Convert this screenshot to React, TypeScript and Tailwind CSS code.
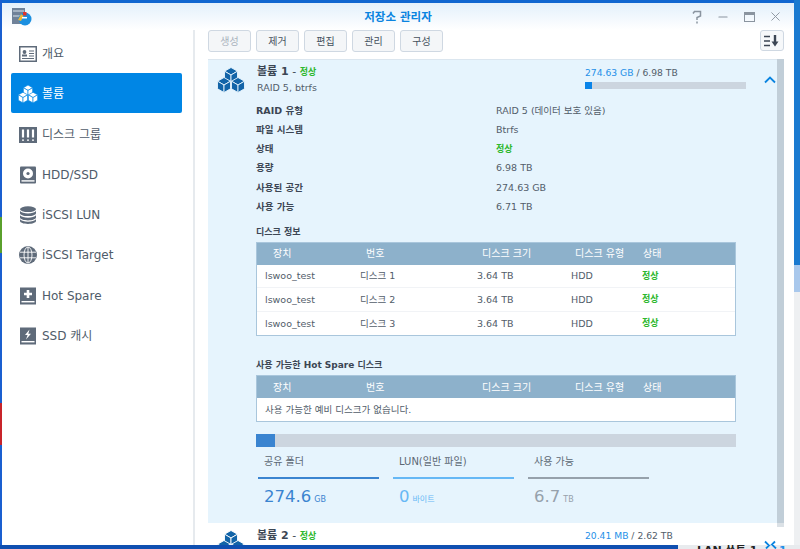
import { Minus, X } from "lucide-react";
import type { ReactNode } from "react";

const font = { fontFamily: '"DejaVu Sans", "Noto Sans CJK KR", sans-serif' };

function Cubes({ className, fill, line }: { className?: string; fill: string; line: string }) {
  const cube = (x: number, y: number) => (
    <g key={`${x}-${y}`} transform={`translate(${x} ${y})`} stroke={line} strokeWidth="0.9" strokeLinejoin="round" fill={fill}>
      <path d="M0 -7.5 L6.5 -3.8 L0 0 L-6.5 -3.8 Z" />
      <path d="M-6.5 -3.8 L0 0 L0 7.5 L-6.5 3.8 Z" />
      <path d="M6.5 -3.8 L0 0 L0 7.5 L6.5 3.8 Z" />
    </g>
  );
  return (
    <svg viewBox="0 0 28 26" className={className}>
      {cube(14, 8)}
      {cube(7, 18)}
      {cube(21, 18)}
    </svg>
  );
}

function OverviewIcon() {
  return (
    <svg viewBox="0 0 18 18" className="h-[18px] w-[18px]">
      <rect x="0.75" y="1.75" width="16.5" height="14.5" fill="#fff" stroke="#5f6b7a" strokeWidth="1.5" />
      <circle cx="5.5" cy="7" r="1.9" fill="#5f6b7a" />
      <rect x="3" y="9.5" width="5" height="2" fill="#5f6b7a" />
      <path d="M10 6h5M10 8.5h5M10 11h5M3 13.5h12" stroke="#5f6b7a" strokeWidth="1.1" />
    </svg>
  );
}

function DiskGroupIcon() {
  return (
    <svg viewBox="0 0 18 18" className="h-[18px] w-[18px]">
      <rect x="0" y="1" width="18" height="16" fill="#5f6b7a" />
      <path d="M4 3.5v8M9 3.5v8M14 3.5v8" stroke="#fff" strokeWidth="2.2" />
      <path d="M4 13.500v1.200M9 13.500v1.200M14 13.500v1.200" stroke="#fff" strokeWidth="2" />
    </svg>
  );
}

function HddIcon() {
  return (
    <svg viewBox="0 0 18 18" className="h-[18px] w-[18px]">
      <rect x="1" y="0.5" width="16" height="17" rx="1" fill="#5f6b7a" />
      <circle cx="9" cy="7.5" r="5" fill="#fff" />
      <circle cx="9" cy="7.5" r="1.6" fill="#5f6b7a" />
      <rect x="2.5" y="14.2" width="13" height="1.4" fill="#fff" />
    </svg>
  );
}

function LunIcon() {
  return (
    <svg viewBox="0 0 18 18" className="h-[18px] w-[18px]" fill="#5f6b7a">
      <ellipse cx="9" cy="3.2" rx="8" ry="2.9" />
      <path d="M1 5v2.2c0 1.6 3.6 2.9 8 2.9s8-1.3 8-2.9V5c-1.2 1.6-4.4 2.4-8 2.4S2.2 6.600 1 5Z" />
      <path d="M1 9.300v2.200c0 1.600 3.600 2.900 8 2.900s8-1.300 8-2.900V9.300c-1.200 1.600-4.400 2.400-8 2.400s-6.800-.8-8-2.400Z" />
      <path d="M1 13.300v1.700c0 1.600 3.600 2.900 8 2.900s8-1.300 8-2.900v-1.700c-1.200 1.600-4.400 2.400-8 2.400s-6.800-.8-8-2.400Z" />
    </svg>
  );
}

function GlobeIcon() {
  return (
    <svg viewBox="0 0 18 18" className="h-[18px] w-[18px]">
      <circle cx="9" cy="9" r="9" fill="#5f6b7a" />
      <path d="M1 6.200h16M1 11.800h16M9 1v16" stroke="#fff" strokeWidth="0.9" />
      <ellipse cx="9" cy="9" rx="4" ry="8" fill="none" stroke="#fff" strokeWidth="0.9" />
    </svg>
  );
}

function SpareIcon() {
  return (
    <svg viewBox="0 0 18 18" className="h-[18px] w-[18px]">
      <rect x="1" y="0.5" width="16" height="17" fill="#5f6b7a" />
      <path d="M9 3v8M5 7h8" stroke="#fff" strokeWidth="2.6" />
      <rect x="2.500" y="14" width="13" height="1.400" fill="#fff" />
    </svg>
  );
}

function SsdIcon() {
  return (
    <svg viewBox="0 0 18 18" className="h-[18px] w-[18px]">
      <rect x="1" y="0.5" width="16" height="17" fill="#5f6b7a" />
      <path d="M10.500 2.500 6 8h2.600L7 12.500 12 6.800H9.300Z" fill="#fff" />
      <rect x="2.500" y="14" width="13" height="1.400" fill="#fff" />
    </svg>
  );
}

function AppIcon() {
  return (
    <svg viewBox="0 0 20 18" className="h-[18px] w-5">
      <rect x="0" y="0" width="13" height="16" fill="#6f8299" />
      <path d="M1 3h11M1 8h11" stroke="#b6c3d1" strokeWidth="1.500" />
      <circle cx="13" cy="11" r="6.500" fill="#1b8fe0" />
      <path d="M6 12 L9 6 L11.500 8 L9 13 Z" fill="#f2b632" />
      <rect x="11" y="4" width="3.500" height="3.500" fill="#e0342c" />
      <rect x="10" y="9" width="5" height="1.500" fill="#fff" />
    </svg>
  );
}

function SortIcon() {
  return (
    <svg viewBox="0 0 16 12" className="h-3 w-4">
      <path d="M0 1.500h6M0 6h6M0 10.500h6" stroke="#3c4654" strokeWidth="1.500" />
      <path d="M11 0v7" stroke="#3c4654" strokeWidth="2.400" />
      <path d="M7.500 6.500h7L11 11.500Z" fill="#3c4654" />
    </svg>
  );
}

function Chevron({ className, down }: { className?: string; down?: boolean }) {
  return (
    <svg viewBox="0 0 12 8" className={`h-2 w-3 shrink-0 ${className ?? ""}`} fill="none" stroke="#0a84e0" strokeWidth="1.800">
      <path d={down ? "M1 1.500 L6 6.500 L11 1.500" : "M1 6.500 L6 1.500 L11 6.500"} />
    </svg>
  );
}

const navItems: { label: string; icon: ReactNode; active?: boolean }[] = [
  { label: "개요", icon: <OverviewIcon /> },
  { label: "볼륨", icon: <Cubes className="h-[20px] w-[20px] shrink-0" fill="#fff" line="#0086e5" />, active: true },
  { label: "디스크 그룹", icon: <DiskGroupIcon /> },
  { label: "HDD/SSD", icon: <HddIcon /> },
  { label: "iSCSI LUN", icon: <LunIcon /> },
  { label: "iSCSI Target", icon: <GlobeIcon /> },
  { label: "Hot Spare", icon: <SpareIcon /> },
  { label: "SSD 캐시", icon: <SsdIcon /> },
];

const details = [
  ["RAID 유형", "RAID 5 (데이터 보호 있음)"],
  ["파일 시스템", "Btrfs"],
  ["상태", "정상"],
  ["용량", "6.98 TB"],
  ["사용된 공간", "274.63 GB"],
  ["사용 가능", "6.71 TB"],
];

const columns = "grid grid-cols-[103px_117px_94px_71px_1fr]";

function TableHead() {
  return (
    <div className={`${columns} h-[22px] items-center bg-[#8db1cb] text-[10px] text-white`}>
      <span className="pl-[16px]">장치</span>
      <span className="pl-[6px]">번호</span>
      <span className="pl-[5px]">디스크 크기</span>
      <span className="pl-[4px]">디스크 유형</span>
      <span className="pl-[1px]">상태</span>
    </div>
  );
}

function Stat({ title, value, unit, line, color, unitColor }: { title: string; value: string; unit: string; line: string; color: string; unitColor: string }) {
  return (
    <div className="w-[121px]">
      <div className="h-[30px] pl-[6px] pt-[8px] text-[10px] leading-[14px] text-[#5c6773]">{title}</div>
      <div className={`h-[2px] ${line}`} />
      <div className="flex items-baseline gap-[3px] pl-[6px] pt-[6px]">
        <span className={`text-[16.500px] leading-[24px] ${color}`}>{value}</span>
        <span className={`text-[8px] ${unitColor}`}>{unit}</span>
      </div>
    </div>
  );
}

export default function App() {
  return (
    <div className="flex h-[549px] w-[800px] flex-col overflow-hidden bg-[#1066d0]" style={font}>
      <div className="flex h-[545px] shrink-0">
        <div className="flex w-[2px] shrink-0 flex-col bg-[#1a5fd0]">
          <div className="mt-[217px] h-[36px] bg-[#5aa02c]" />
          <div className="mt-[150px] h-[42px] bg-[#c8242a]" />
        </div>
        <div className="mt-[3px] flex h-[542px] w-[792px] shrink-0 flex-col overflow-hidden bg-white">
          <header className="relative flex h-[27px] shrink-0 items-center justify-center bg-gradient-to-b from-[#e3f0fb] to-white pt-[2px]">
            <div className="absolute left-[10px] top-[5px]">
              <AppIcon />
            </div>
            <span className="text-[11.500px] font-bold text-[#0a84e0]">저장소 관리자</span>
            <div className="absolute right-[6px] top-[6px] flex items-center text-[#8a949f]">
              <span className="flex w-[26px] justify-center">
                <svg viewBox="0 0 10 14" className="h-[14px] w-[10px]" fill="none" stroke="#8a949f" strokeWidth="1.500">
                  <path d="M1 3.500 L2.500 1.500 H8.500 V6 L5 7.500 V10" />
                  <path d="M5 11.500 V13.500" />
                </svg>
              </span>
              <span className="flex w-[26px] justify-center">
                <Minus className="h-[14px] w-[14px]" strokeWidth={1.8} />
              </span>
              <span className="flex w-[26px] justify-center">
                <span className="h-[10px] w-[11px] border border-t-[3px] border-[#8a949f]" />
              </span>
              <span className="flex w-[26px] justify-center">
                <X className="h-[15px] w-[15px]" strokeWidth={1.5} />
              </span>
            </div>
          </header>

          <div className="flex min-h-0 flex-1">
            <nav className="w-[193px] shrink-0 border-r-2 border-[#e6eaee] pl-[9px] pr-[11px] pt-[3px]">
              {navItems.map((item) => (
                <div
                  key={item.label}
                  className={`mb-[0.3px] flex h-[40px] items-center gap-[5px] rounded-[2px] pl-[8px] pt-[2px] text-[12px] ${item.active ? "bg-[#0086e5] text-white" : "text-[#4f5b69]"}`}
                >
                  <span className="flex w-[18px] items-center justify-center">{item.icon}</span>
                  <span>{item.label}</span>
                </div>
              ))}
            </nav>

            <main className="flex min-w-0 flex-1 flex-col pl-[13px] pr-[10px]">
              <div className="flex h-[29px] shrink-0 items-start justify-between">
                <div className="flex gap-[5px]">
                  {["생성", "제거", "편집", "관리", "구성"].map((label, i) => (
                    <button
                      key={label}
                      className={`h-[22px] w-[43px] rounded-[3px] border border-[#cfd8e2] bg-[#f4f6f8] text-[10px] ${i === 0 ? "text-[#a9b2bc]" : "text-[#46515e]"}`}
                    >
                      {label}
                    </button>
                  ))}
                </div>
                <button className="flex h-[21px] w-[24px] items-center justify-center rounded-[3px] border border-[#cfd8e2] bg-[#f6f8fa]">
                  <SortIcon />
                </button>
              </div>

              <div className="flex min-h-0 flex-1">
                <div className="min-w-0 flex-1 overflow-hidden">
                  <section className="h-[464px] border-t border-[#dbe6ef] bg-[#e6f4fd] pl-[9px]">
                    <div className="flex h-[40px] items-start pt-[2px]">
                      <Cubes className="mt-[5px] h-[26px] w-[28px] shrink-0" fill="#1264a8" line="#e6f4fd" />
                      <div className="ml-[12px] mt-[2px] w-[328px] shrink-0">
                        <div className="text-[11px] leading-[15px] text-[#3c4654]">
                          <span className="font-bold">볼륨 1</span> - <span className="text-[9px] font-bold text-[#2eb82e]">정상</span>
                        </div>
                        <div className="mt-[1px] text-[9.500px] leading-[14px] text-[#525d6a]">RAID 5, btrfs</div>
                      </div>
                      <div className="w-[161px] shrink-0 pt-[4px]">
                        <div className="text-[9.200px] leading-[14px] text-[#525d6a]">
                          <span className="text-[#1e90e8]">274.63 GB</span> / 6.98 TB
                        </div>
                        <div className="mt-[2px] h-[7px] bg-[#ccd5df]">
                          <div className="h-full w-[7px] bg-[#0a84e8]" />
                        </div>
                      </div>
                      <Chevron className="ml-[18px] mt-[14px]" />
                    </div>

                    <div className="ml-[39px] mt-[1px]">
                      {details.map(([k, v]) => (
                        <div key={k} className="flex h-[19.300px] items-center text-[9.500px]">
                          <span className="w-[240px] font-bold text-[#3c4654]">{k}</span>
                          <span className={v === "정상" ? "pt-[1px] text-[9px] font-bold text-[#2eb82e]" : "text-[#525d6a]"}>{v}</span>
                        </div>
                      ))}

                      <div className="mt-[7px] h-[18px] text-[9px] font-bold leading-[16px] text-[#3c4654]">디스크 정보</div>
                      <div className="w-[480px] border border-[#a9c6dc] bg-white">
                        <TableHead />
                        {[1, 2, 3].map((n) => (
                          <div key={n} className={`${columns} h-[23.500px] items-center border-b border-[#f1f3f6] pt-[1px] text-[9.500px] text-[#525d6a] last:border-b-0`}>
                            <span className="pl-[8px]">lswoo_test</span>
                            <span>디스크 {n}</span>
                            <span>3.64 TB</span>
                            <span>HDD</span>
                            <span className="text-[9px] font-bold text-[#2eb82e]">정상</span>
                          </div>
                        ))}
                      </div>

                      <div className="mt-[21px] h-[18px] text-[9px] font-bold leading-[16px] text-[#3c4654]">사용 가능한 Hot Spare 디스크</div>
                      <div className="w-[480px] border border-[#a9c6dc] bg-white">
                        <TableHead />
                        <div className="flex h-[23px] items-center pl-[8px] text-[9.500px] text-[#525d6a]">사용 가능한 예비 디스크가 없습니다.</div>
                      </div>

                      <div className="mt-[12px] h-[13px] w-[480px] bg-[#ccd5df]">
                        <div className="h-full w-[19px] bg-[#3a84d0]" />
                      </div>

                      <div className="flex w-[480px] gap-[14px] pl-[2px]">
                        <Stat title="공유 폴더" value="274.6" unit="GB" line="bg-[#3a84d0]" color="text-[#3a84d0]" unitColor="text-[#3a84d0]" />
                        <Stat title="LUN(일반 파일)" value="0" unit="바이트" line="bg-[#66b8f5]" color="text-[#66b8f5]" unitColor="text-[#66b8f5]" />
                        <Stat title="사용 가능" value="6.7" unit="TB" line="bg-[#96a1ab]" color="text-[#96a1ab]" unitColor="text-[#96a1ab]" />
                      </div>
                    </div>
                  </section>

                  <section className="flex h-[24px] items-start bg-white pl-[9px] pt-[5px]">
                    <Cubes className="mt-[2px] h-[26px] w-[28px] shrink-0" fill="#1264a8" line="#fff" />
                    <div className="ml-[12px] w-[328px] shrink-0 text-[11px] leading-[15px] text-[#3c4654]">
                      <span className="font-bold">볼륨 2</span> - <span className="text-[9px] font-bold text-[#2eb82e]">정상</span>
                    </div>
                    <div className="w-[161px] shrink-0 text-[9.200px] leading-[15px] text-[#525d6a]">
                      <span className="text-[#1e90e8]">20.41 MB</span> / 2.62 TB
                    </div>
                    <Chevron down className="ml-[18px] mt-[12px]" />
                  </section>
                </div>
                <div className="h-[468px] w-[7px] shrink-0 self-start border-b-4 border-[#dbe1e6] bg-[#c1ced8]" />
              </div>
            </main>
          </div>
        </div>
        <div className="flex w-[6px] shrink-0 flex-col">
          <div className="h-[265px] bg-[#1a7ad0]" />
          <div className="h-[27px] bg-[#a9c8ec]" />
          <div className="flex-1 bg-[#eef0f2]" />
        </div>
      </div>
      <div className="flex h-[4px] shrink-0 overflow-hidden">
        <div className="w-[678px] shrink-0 bg-[#0f4fb0]" />
        <div className="flex flex-1 items-start bg-[#e8ebee] pl-[19px] text-[11px] font-bold leading-[12px] text-[#222]">
          <span className="w-[68px] shrink-0">LAN 쏘트 1</span>
          <Chevron className="-mt-[3px]" />
          <span className="ml-[2px] text-[#1e90e8]">1 KB</span>
        </div>
      </div>
    </div>
  );
}
